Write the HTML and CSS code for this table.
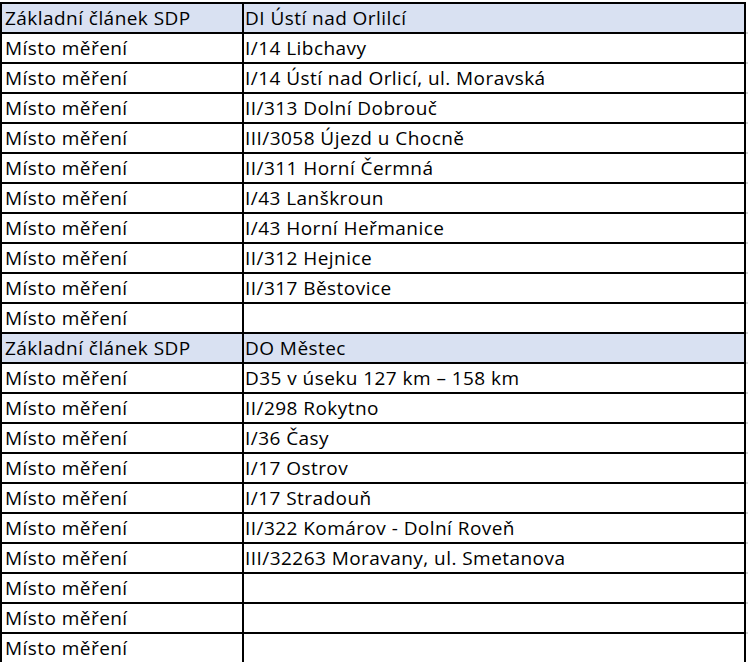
FILE: index.html
```html
<!DOCTYPE html>
<html lang="cs">
<head>
<meta charset="utf-8">
<title>SDP</title>
<link rel="stylesheet" href="styles.css">
</head>
<body>
<div class="sheet">
  <div class="row head first"><div class="cell a">Základní článek SDP</div><div class="cell b">DI Ústí nad Orlilcí</div><div class="stub"></div></div>
  <div class="row"><div class="cell a">Místo měření</div><div class="cell b">I/14 Libchavy</div><div class="stub"></div></div>
  <div class="row"><div class="cell a">Místo měření</div><div class="cell b">I/14 Ústí nad Orlicí, ul. Moravská</div><div class="stub"></div></div>
  <div class="row"><div class="cell a">Místo měření</div><div class="cell b">II/313 Dolní Dobrouč</div><div class="stub"></div></div>
  <div class="row"><div class="cell a">Místo měření</div><div class="cell b">III/3058 Újezd u Chocně</div><div class="stub"></div></div>
  <div class="row"><div class="cell a">Místo měření</div><div class="cell b">II/311 Horní Čermná</div><div class="stub"></div></div>
  <div class="row"><div class="cell a">Místo měření</div><div class="cell b">I/43 Lanškroun</div><div class="stub"></div></div>
  <div class="row"><div class="cell a">Místo měření</div><div class="cell b">I/43 Horní Heřmanice</div><div class="stub"></div></div>
  <div class="row"><div class="cell a">Místo měření</div><div class="cell b">II/312 Hejnice</div><div class="stub"></div></div>
  <div class="row"><div class="cell a">Místo měření</div><div class="cell b">II/317 Běstovice</div><div class="stub"></div></div>
  <div class="row"><div class="cell a">Místo měření</div><div class="cell b"></div><div class="stub"></div></div>
  <div class="row head"><div class="cell a">Základní článek SDP</div><div class="cell b">DO Městec</div><div class="stub"></div></div>
  <div class="row"><div class="cell a">Místo měření</div><div class="cell b">D35 v úseku 127 km – 158 km</div><div class="stub"></div></div>
  <div class="row"><div class="cell a">Místo měření</div><div class="cell b">II/298 Rokytno</div><div class="stub"></div></div>
  <div class="row"><div class="cell a">Místo měření</div><div class="cell b">I/36 Časy</div><div class="stub"></div></div>
  <div class="row"><div class="cell a">Místo měření</div><div class="cell b">I/17 Ostrov</div><div class="stub"></div></div>
  <div class="row"><div class="cell a">Místo měření</div><div class="cell b">I/17 Stradouň</div><div class="stub"></div></div>
  <div class="row"><div class="cell a">Místo měření</div><div class="cell b">II/322 Komárov - Dolní Roveň</div><div class="stub"></div></div>
  <div class="row"><div class="cell a">Místo měření</div><div class="cell b">III/32263 Moravany, ul. Smetanova</div><div class="stub"></div></div>
  <div class="row"><div class="cell a">Místo měření</div><div class="cell b"></div><div class="stub"></div></div>
  <div class="row"><div class="cell a">Místo měření</div><div class="cell b"></div><div class="stub"></div></div>
  <div class="row"><div class="cell a">Místo měření</div><div class="cell b"></div><div class="stub"></div></div>
</div>
</body>
</html>
```
FILE: styles.css
```css
html, body {
  margin: 0;
  padding: 0;
  background: #ffffff;
}
.sheet {
  padding-top: 2px;
  font-family: "Open Sans", "Liberation Sans", sans-serif;
  font-size: 19px;
  letter-spacing: 0.45px;
  color: #000000;
}
.row {
  display: grid;
  grid-template-columns: 244px 502px 2px;
  height: 30px;
}
.cell {
  box-sizing: border-box;
  height: 30px;
  padding-top: 1px;
  border-bottom: 2px solid #000000;
  border-right: 2px solid #000000;
  line-height: 26px;
  white-space: nowrap;
  overflow: hidden;
}
.first {
  height: 32px;
}
.first .cell {
  height: 32px;
  border-top: 2px solid #000000;
}
.a {
  border-left: 2px solid #000000;
  padding-left: 3px;
}
.b {
  padding-left: 1px;
}
.head .cell {
  background: #d9e1f2;
}
.stub {
  box-sizing: border-box;
  height: 30px;
  border-bottom: 2px solid #d6d6d6;
}
.first .stub {
  height: 32px;
}
```
